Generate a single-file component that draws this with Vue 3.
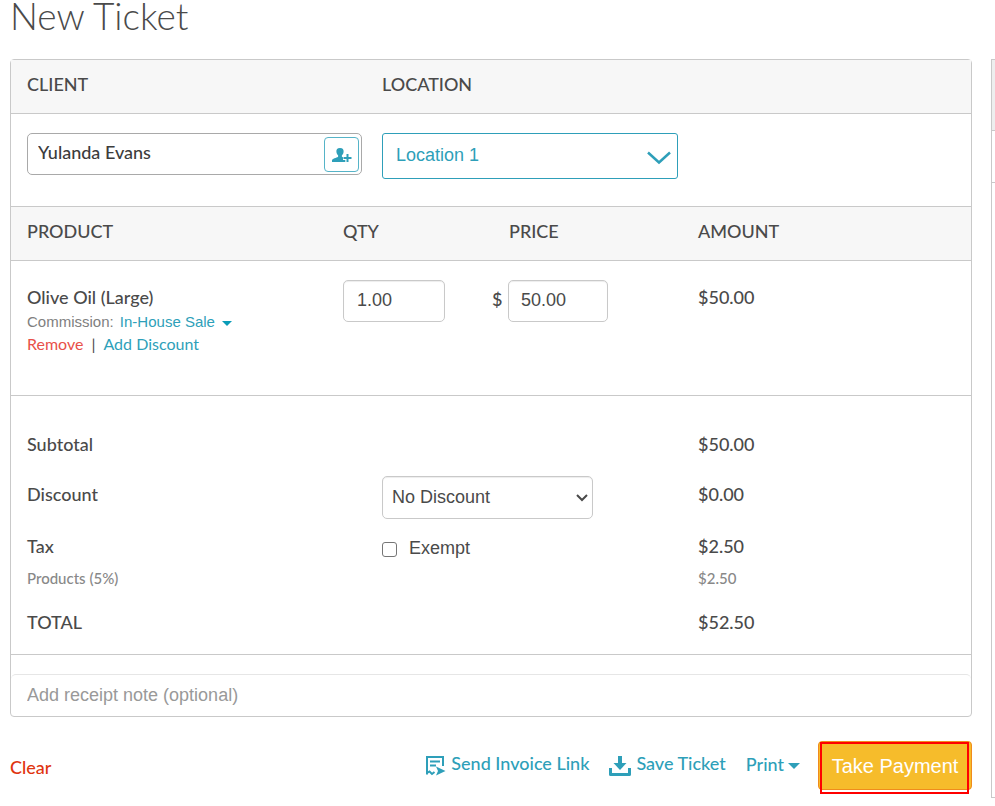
<script setup>
import { ref } from 'vue'

const client = ref('Yulanda Evans')
const location = ref('Location 1')
const qty = ref('1.00')
const price = ref('50.00')
const discount = ref('No Discount')
const exempt = ref(false)
const note = ref('')
</script>

<template>
  <div class="page">
    <main class="main">
      <h1>New Ticket</h1>

      <form class="ticket" @submit.prevent>
        <div class="row head wide">
          <label for="client">CLIENT</label>
          <label for="location">LOCATION</label>
        </div>
        <div class="row wide people">
          <div class="client">
            <input id="client" v-model="client" type="text" />
            <button type="button" class="add-client" aria-label="Add client">
              <svg width="20" height="14" viewBox="0 0 20 14" fill="currentColor">
                <path d="M8 0C10.8 0 11.8 1.5 11.6 3.7C11.5 5.6 10.6 6.7 9.9 7.3V8.8C11 9.6 13.3 10 13.6 11.3V14H0V12.6C0 10.6 4.6 10 6.1 8.8V7.3C5.4 6.6 4.5 5.5 4.4 3.7C4.2 1.5 5.2 0 8 0Z" />
                <path d="M15.5 6V14M11 10H20" stroke="#fff" stroke-width="4" />
                <path d="M14.5 6H16.5V9H19.5V11H16.5V14H14.5V11H11.5V9H14.5Z" />
              </svg>
            </button>
          </div>
          <div class="location">
            <select id="location" v-model="location">
              <option>Location 1</option>
            </select>
            <svg class="chevron" width="24" height="14" viewBox="0 0 24 14" fill="none" stroke="currentColor" stroke-width="2.5">
              <path d="M1 1.5L12 11.5L23 1.5" />
            </svg>
          </div>
        </div>

        <table class="products">
          <thead>
            <tr class="row head items">
              <th>PRODUCT</th>
              <th>QTY</th>
              <th class="price-head">PRICE</th>
              <th>AMOUNT</th>
            </tr>
          </thead>
          <tbody>
            <tr class="row items item">
              <td class="product">
                <div class="name">Olive Oil (Large)</div>
                <div class="commission">
                  Commission:
                  <button type="button">In-House Sale <i class="caret small"></i></button>
                </div>
                <div class="actions">
                  <a href="#" class="remove">Remove</a>
                  <span>|</span>
                  <a href="#">Add Discount</a>
                </div>
              </td>
              <td><input v-model="qty" class="number" type="text" aria-label="Quantity" /></td>
              <td class="price">
                <label for="price">$</label>
                <input id="price" v-model="price" class="number" type="text" />
              </td>
              <td class="amount">$50.00</td>
            </tr>
          </tbody>
        </table>

        <table class="totals">
          <tbody>
            <tr class="row wide subtotal">
              <th>Subtotal</th>
              <td></td>
              <td>$50.00</td>
            </tr>
            <tr class="row wide discount">
              <th><label for="discount">Discount</label></th>
              <td>
                <div class="discount-box">
                  <select id="discount" v-model="discount">
                    <option>No Discount</option>
                  </select>
                  <svg class="chevron" width="12" height="8" viewBox="0 0 12 8" fill="none" stroke="currentColor" stroke-width="2">
                    <path d="M1 1L6 6L11 1" />
                  </svg>
                </div>
              </td>
              <td>$0.00</td>
            </tr>
            <tr class="row wide tax">
              <th>Tax</th>
              <td>
                <label class="exempt"><input v-model="exempt" type="checkbox" />Exempt</label>
              </td>
              <td>$2.50</td>
            </tr>
            <tr class="row wide detail">
              <th>Products (5%)</th>
              <td></td>
              <td>$2.50</td>
            </tr>
            <tr class="row wide total">
              <th>TOTAL</th>
              <td></td>
              <td>$52.50</td>
            </tr>
          </tbody>
        </table>

        <div class="note">
          <input v-model="note" type="text" placeholder="Add receipt note (optional)" aria-label="Receipt note" />
        </div>
      </form>

      <footer>
        <a href="#" class="clear">Clear</a>
        <div class="links">
          <a href="#" class="send">
            <svg width="20" height="20" viewBox="0 0 20 20" fill="none" stroke="currentColor" stroke-width="2">
              <path d="M1 18.5V1H17V10M1 17L3.5 15.5L6 18L8.5 16" />
              <path d="M4 5.5H14M4 9.5H10" />
              <path d="M10 10.5L19.5 15L10 19.5L12 15Z" fill="currentColor" stroke="none" />
            </svg>
            Send Invoice Link
          </a>
          <a href="#" class="save">
            <svg width="22" height="20" viewBox="0 0 22 20" fill="none" stroke="currentColor">
              <path d="M1.5 12V18.5H20.5V12" stroke-width="3" stroke-linejoin="round" />
              <path d="M11 0V8" stroke-width="4" />
              <path d="M4.5 7H17.5L11 14Z" fill="currentColor" stroke="none" />
            </svg>
            Save Ticket
          </a>
          <button type="button" class="print">Print<i class="caret"></i></button>
        </div>
        <div class="pay">
          <button type="button">Take Payment</button>
          <span class="highlight"></span>
        </div>
      </footer>
    </main>

    <aside>
      <div class="side-head"></div>
      <div class="side-row"></div>
    </aside>
  </div>
</template>

<style>
body {
  background: #fff;
}
</style>

<style scoped>
.page {
  display: grid;
  grid-template-columns: minmax(0, 1fr) 4px;
  column-gap: 19px;
  padding-left: 10px;
  color: #4a4a4a;
  font: 500 18px/24px Lato, "Open Sans", sans-serif;
}
.page *,
.page *::before {
  box-sizing: border-box;
}
input,
select,
button {
  margin: 0;
  font: inherit;
  color: inherit;
}
button {
  padding: 0;
  border: 0;
  background: none;
}
a,
.print {
  color: #2e9fb9;
  text-decoration: none;
}
h1 {
  margin: 0;
  height: 59px;
  font-size: 37px;
  line-height: 32px;
  font-weight: 300;
}
.ticket {
  border: 1px solid #c9c9c9;
  border-radius: 4px;
}
.row {
  display: grid;
  padding: 0 16px;
}
.wide {
  grid-template-columns: 355fr 316fr 257fr;
}
.items {
  grid-template-columns: 316fr 149fr 206fr 257fr;
}
.head {
  height: 54px;
  align-items: center;
  padding-bottom: 6px;
  background: #f7f7f7;
  border-bottom: 1px solid #c9c9c9;
}
.people {
  height: 93px;
  padding-top: 19px;
  align-items: start;
  border-bottom: 1px solid #c9c9c9;
}
table {
  display: block;
}
thead,
tbody {
  display: block;
}
th,
td {
  padding: 0;
  text-align: left;
  font-weight: inherit;
}
.client {
  display: flex;
  height: 42px;
  margin-right: 20px;
  padding: 3px 2px 3px 10px;
  border: 1px solid #a9a9a9;
  border-radius: 5px;
}
.client input {
  flex: 1;
  min-width: 0;
  height: 30px;
  padding: 0;
  border: 0;
  outline: 0;
  background: none;
  color: #3c3c3c;
}
.add-client {
  display: grid;
  place-items: center;
  width: 35px;
  height: 35px;
  border: 1px solid #56b4c8;
  border-radius: 4px;
  color: #2e9fb9;
}
.location,
.discount-box {
  position: relative;
}
select {
  display: block;
  width: 100%;
  appearance: none;
  background: #fff;
  font-family: "Liberation Sans", Arial, sans-serif;
  font-weight: 400;
}
.chevron {
  position: absolute;
  pointer-events: none;
}
.location {
  margin-right: 20px;
  color: #2e9fb9;
}
.location select {
  height: 46px;
  padding: 0 13px 2px;
  border: 1px solid #2e9fb9;
  border-radius: 3px;
}
.location .chevron {
  right: 7px;
  top: 18px;
}
.price-head {
  padding-left: 17px;
}
.item {
  height: 135px;
  padding-top: 19px;
  align-items: start;
  border-bottom: 1px solid #c9c9c9;
}
.product {
  padding-top: 5px;
}
.commission {
  padding-top: 1px;
  color: #808080;
  font-family: "Liberation Sans", Arial, sans-serif;
  font-size: 15px;
  font-weight: 400;
}
.commission button {
  margin-left: 2px;
  color: #2e9fb9;
}
.actions {
  display: flex;
  gap: 8px;
  font-size: 16px;
  font-weight: 400;
  line-height: 20px;
}
.remove {
  color: #e8504a;
}
.caret {
  display: inline-block;
  margin-left: 4px;
  border: 6px solid transparent;
  border-top-color: currentColor;
  border-bottom: 0;
  vertical-align: 2px;
}
.caret.small {
  margin-left: 3px;
  border-width: 5px 5px 0;
  color: #0a9cb8;
  vertical-align: 1px;
}
.number {
  display: block;
  width: 102px;
  height: 42px;
  padding: 0 12px 2px 13px;
  border: 1px solid #c9c9c9;
  border-radius: 5px;
  box-shadow: inset 0 1px 1px #00000013;
  background: #fff;
  font-family: "Liberation Sans", Arial, sans-serif;
  font-weight: 400;
}
.price {
  display: flex;
}
.price label {
  width: 16px;
  padding-top: 7px;
}
.price .number {
  width: 100px;
  padding-left: 12px;
}
.amount {
  padding-top: 5px;
}
.totals {
  height: 259px;
  padding-top: 36px;
  border-bottom: 1px solid #c9c9c9;
}
.subtotal {
  height: 44px;
}
.discount {
  height: 58px;
}
.discount th,
.discount td:last-child {
  padding-top: 6px;
}
.discount-box {
  width: 211px;
}
.discount-box select {
  height: 43px;
  padding: 0 9px 2px;
  border: 1px solid #c9c9c9;
  border-radius: 5px;
  box-shadow: inset 0 1px 1px #00000013;
}
.discount-box .chevron {
  right: 5px;
  top: 18px;
}
.tax {
  height: 33px;
}
.exempt {
  display: flex;
  align-items: center;
  gap: 12px;
  padding-top: 2px;
  font-family: "Liberation Sans", Arial, sans-serif;
  font-weight: 400;
}
.exempt input {
  width: 15px;
  height: 15px;
  appearance: none;
  margin-top: 3px;
  border: 1px solid #767676;
  border-radius: 3px;
}
.exempt input:checked {
  background: #2e9fb9;
}
.detail {
  height: 43px;
  color: #888;
  font-size: 15px;
  line-height: 22px;
}
.note {
  padding-top: 19px;
}
.note input {
  display: block;
  width: 100%;
  height: 42px;
  padding: 0 16px;
  border: 0;
  border-top: 1px solid #e6e6e6;
  border-radius: 5px;
  outline: 0;
  background: none;
  font-family: "Liberation Sans", Arial, sans-serif;
  font-weight: 400;
}
.note input::placeholder {
  color: #999;
  opacity: 1;
}
footer {
  display: flex;
  align-items: flex-start;
  justify-content: space-between;
  padding-top: 24px;
}
.clear {
  padding-top: 14px;
  color: #e0350f;
}
.links {
  display: flex;
  flex: 1;
  justify-content: flex-end;
  gap: 20px;
  padding: 10px 18px 0 0;
}
.send,
.save {
  display: flex;
  gap: 5px;
}
.links svg {
  margin-top: 5px;
}
.pay {
  position: relative;
}
.pay button {
  display: block;
  width: 154px;
  height: 49px;
  border: 1px solid #f08c1c;
  border-radius: 4px;
  background: #f6bc2b;
  color: #fff;
  font: 400 20px/24px "Liberation Sans", Arial, sans-serif;
}
.highlight {
  position: absolute;
  inset: 1px 3px -4px 2px;
  border: 2px solid #f00;
  pointer-events: none;
}
aside {
  margin-top: 59px;
  height: 739px;
  border: 1px solid #c9c9c9;
  border-right: 0;
}
.side-head {
  height: 71px;
  background: #eee;
  border-bottom: 1px solid #c9c9c9;
}
.side-row {
  height: 52px;
  border-bottom: 1px solid #c9c9c9;
}
</style>
